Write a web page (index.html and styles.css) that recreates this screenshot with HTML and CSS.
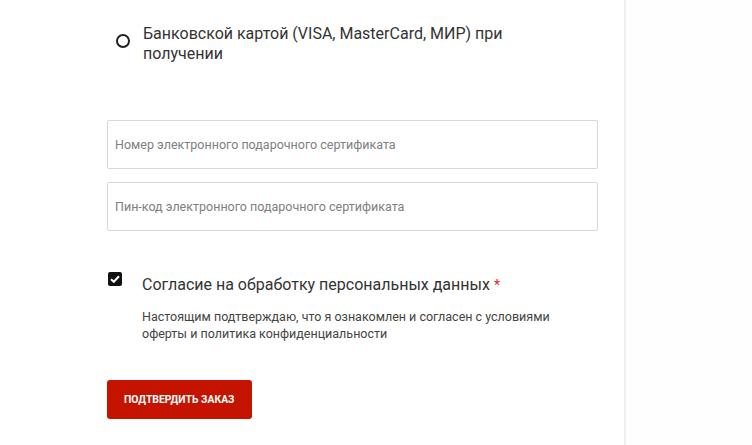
FILE: index.html
```html
<!DOCTYPE html>
<html lang="ru">
<head>
    <meta charset="UTF-8">
    <meta name="viewport" content="width=device-width, initial-scale=1.0">
    <title>Оформление заказа</title>
    <link rel="stylesheet" href="styles.css">
</head>
<body>
    <div class="checkout__layout">
        <main class="checkout__main">
            <form class="order__form">
                <label class="radio__option">
                    <input type="radio" name="payment" value="card">
                    <span class="radio__mark"></span>
                    <span class="radio__text">Банковской картой (VISA, MasterCard, МИР) при получении</span>
                </label>

                <div class="cert__group">
                    <input type="text" class="cert__input" placeholder="Номер электронного подарочного сертификата">
                    <input type="text" class="cert__input" placeholder="Пин-код электронного подарочного сертификата">
                </div>

                <label class="consent">
                    <input type="checkbox" checked>
                    <span class="consent__box">
                        <svg width="10" height="8" viewBox="0 0 10 8"><path d="M1 4.2 L3.8 6.8 L9 1.2" fill="none" stroke="#fff" stroke-width="2"/></svg>
                    </span>
                    <span class="consent__title">Согласие на обработку персональных данных<span class="required">*</span></span>
                </label>
                <p class="consent__text">Настоящим подтверждаю, что я ознакомлен и согласен с условиями оферты и политика конфиденциальности</p>

                <button type="submit" class="main__btn">Подтвердить заказ</button>
            </form>
        </main>
        <aside class="checkout__side"></aside>
    </div>
</body>
</html>
```

FILE: styles.css
```css
body {
    margin: 0;
    background: #fff;
    color: #333;
    font-family: Roboto, 'Liberation Sans', sans-serif;
}
.checkout__layout {
    display: flex;
    height: 445px;
    overflow: hidden;
}
.checkout__main {
    width: 624px;
    border-right: 2px solid #efefef;
}
.checkout__side {
    flex: 1;
    background: #fefefe;
}
.order__form {
    display: flex;
    flex-direction: column;
    align-items: flex-start;
    padding: 24px 26px 0 107px;
}
.radio__option {
    display: flex;
    align-items: flex-start;
    width: 100%;
    cursor: pointer;
}
.radio__option input {
    display: none;
}
.radio__mark {
    flex: none;
    width: 10px;
    height: 10px;
    margin: 10px 13px 0 9px;
    border: 2px solid #222;
    border-radius: 50%;
}
.radio__text {
    font-size: 16px;
    line-height: 20px;
    color: #333;
    max-width: 390px;
}
.cert__group {
    display: flex;
    flex-direction: column;
    gap: 13px;
    width: 100%;
    margin-top: 56px;
}
.cert__input {
    box-sizing: border-box;
    width: 100%;
    height: 49px;
    padding: 0 7px;
    border: 1px solid #d8d8d8;
    border-radius: 2px;
    font-family: inherit;
    font-size: 12.5px;
    color: #333;
    outline: none;
}
.cert__input::placeholder {
    color: #808080;
}
.consent {
    display: flex;
    align-items: flex-start;
    margin-top: 41px;
    cursor: pointer;
}
.consent input {
    display: none;
}
.consent__box {
    flex: none;
    display: flex;
    align-items: center;
    justify-content: center;
    width: 14px;
    height: 14px;
    margin: 0 20px 0 1px;
    background: #111;
    border-radius: 2px;
}
.consent__title {
    font-size: 16px;
    line-height: 20px;
    margin-top: 3px;
    color: #333;
}
.required {
    color: #e3262b;
    margin-left: 4px;
    font-size: 14px;
    vertical-align: top;
}
.consent__text {
    margin: 14px 0 0 35px;
    max-width: 430px;
    font-size: 12.5px;
    line-height: 16.5px;
    color: #444;
}
.main__btn {
    margin-top: 38px;
    height: 39px;
    padding: 0 17px;
    background: #c41400;
    color: #fff;
    border: none;
    border-radius: 3px;
    font-family: inherit;
    font-size: 10.4px;
    font-weight: bold;
    text-transform: uppercase;
    cursor: pointer;
}
```
